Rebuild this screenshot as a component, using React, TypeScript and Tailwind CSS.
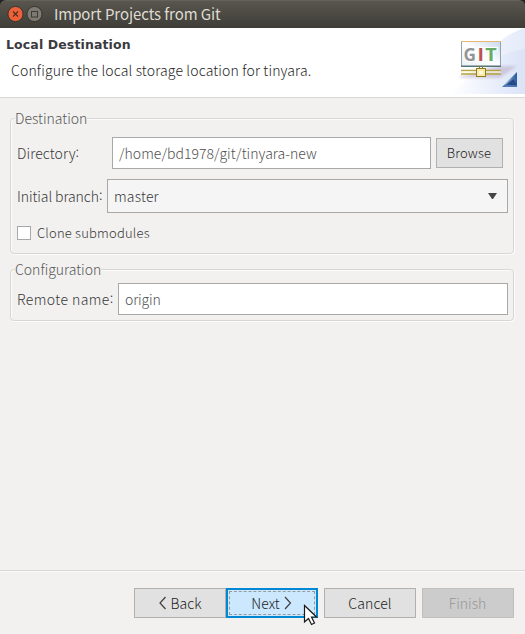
import type { ReactNode } from "react";

function Group({ title, className, children }: { title: string; className: string; children: ReactNode }) {
  return (
    <section className={`relative ml-[10px] w-[504px] rounded-[4px] border border-[#d8d7d6] shadow-[1px_1px_0_#fcfcfc,inset_1px_1px_0_#fcfcfc] ${className}`}>
      <h2 className="absolute left-[4px] -top-[11px] h-[20px] whitespace-nowrap bg-[#f2f1f0] text-[14px] leading-[21px] text-[#585858]">{title}</h2>
      {children}
    </section>
  );
}

function GitBanner() {
  return (
    <svg className="block h-[69px] w-[75px]" viewBox="450 28 75 69">
      <defs>
        <linearGradient id="wash" x1="0" x2="1">
          <stop offset="0" stopColor="#fff" />
          <stop offset="1" stopColor="#d5dff6" />
        </linearGradient>
        <linearGradient id="frame" x1="0" y1="0" x2="0" y2="1">
          <stop offset="0" stopColor="#e9b676" />
          <stop offset="0.45" stopColor="#94a5ad" />
          <stop offset="1" stopColor="#56777c" />
        </linearGradient>
        <linearGradient id="screen" x1="0" y1="1" x2="1" y2="0">
          <stop offset="0" stopColor="#e9eff2" />
          <stop offset="0.5" stopColor="#fff" />
          <stop offset="1" stopColor="#c9d9ee" />
        </linearGradient>
        <linearGradient id="corner" x1="0" x2="1">
          <stop offset="0" stopColor="#a9c8e4" />
          <stop offset="1" stopColor="#2b5b9d" />
        </linearGradient>
        <filter id="soft" x="-20%" y="-60%" width="140%" height="220%"><feGaussianBlur stdDeviation="1.8" /></filter>
      </defs>
      <path d="M450 94Q475 72 483 61Q500 35 525 28V94Z" fill="url(#wash)" opacity=".65" />
      <path d="M450 94Q475 82 490 65Q504 51 525 49V94Z" fill="url(#wash)" opacity=".65" />
      <path d="M460 76L500 66H517L500 78H460Z" fill="#a993b5" opacity=".4" filter="url(#soft)" />
      <rect x="461.5" y="41.5" width="39" height="25" fill="url(#screen)" />
      <path d="M461 41.5H501" stroke="#e9b676" />
      <path d="M461.5 42V66M500.5 42V66" stroke="#91a4ab" />
      <path d="M461 66.2H501" stroke="#54767b" strokeWidth="1.5" />
      <g fontFamily="Open Sans, sans-serif" fontWeight="700" fontSize="17" stroke="#fff" strokeWidth="2" paintOrder="stroke">
        <text x="463.5" y="60.5" fill="#929496" textLength="12.5" lengthAdjust="spacingAndGlyphs">G</text>
        <text x="477.5" y="60.5" fill="#bd5055" textLength="6.5" lengthAdjust="spacingAndGlyphs">I</text>
        <text x="485.3" y="60.5" fill="#64ad68" textLength="11.5" lengthAdjust="spacingAndGlyphs">T</text>
      </g>
      <path d="M461 70.5H501M461 74H501" stroke="#b5a444" strokeWidth="1.4" />
      <path d="M461 72H501" stroke="#fffbd4" />
      <path d="M479.5 66V69M482.5 66V69" stroke="#8b7b24" />
      <rect x="476.5" y="68.5" width="9" height="8" fill="#f8e9a9" stroke="#917d1e" />
      <rect x="479" y="71" width="4" height="3" fill="#fffae2" />
      <path d="M502 87L517 72V87Z" fill="url(#corner)" />
      <path d="M505 85.5L513.5 79L517 85.5Z" fill="#244b87" />
      <path d="M502 87L505 84.5L517 85.5V87Z" fill="#4f79b4" />
    </svg>
  );
}

function Chevron({ left = false }: { left?: boolean }) {
  return (
    <svg width="8" height="14" viewBox="0 0 8 14" className="shrink-0" fill="none" stroke="#404040" strokeWidth="1.2">
      <path d={left ? "M6.5 1L1 7L6.5 13" : "M1 1L6.5 7L1 13"} />
    </svg>
  );
}

function Label({ className, children }: { className: string; children: string }) {
  return (
    <span className={`shrink-0 whitespace-nowrap ${className}`}>
      {children}<span className="relative -top-[2px]">:</span>
    </span>
  );
}

export default function App() {
  return (
    <main className="relative flex h-[634px] w-[525px] flex-col overflow-hidden bg-[#f2f1f0] font-['Noto_Sans_CJK_KR','Noto_Sans',sans-serif] text-[14px] font-light text-[#383838]">
      <div className="h-[28px] shrink-0 bg-[#222]">
        <header className="flex h-[28px] items-center rounded-t-[6px] border-t border-[#63615a] bg-linear-to-b from-[#59564e] to-[#3e3d38] pl-[7px]">
          <svg width="36" height="17" viewBox="0 0 36 17">
            <circle cx="8.5" cy="8" r="7.6" fill="#ed6138" stroke="#353430" />
            <path d="M6 5.5L11 10.5M11 5.5L6 10.5" stroke="#4a2d22" strokeWidth="1.1" />
            <circle cx="27.5" cy="8" r="7.6" fill="#7d7a71" stroke="#353430" />
            <rect x="24.5" y="5.5" width="6" height="5.5" fill="none" stroke="#3c3b37" />
          </svg>
          <h1 className="ml-[11px] whitespace-nowrap text-[15px] font-normal tracking-[-0.08px] text-[#dfdbd2]">Import Projects from Git</h1>
        </header>
      </div>
      <div className="flex h-[70px] shrink-0 justify-between border-b border-[#d9d8d7] bg-white">
        <div>
          <h2 className="ml-[6px] mt-[8px] whitespace-nowrap font-['DejaVu_Sans',sans-serif] text-[12.5px] font-bold leading-[18px] tracking-[0.12px] text-[#3b3b3f]">Local Destination</h2>
          <p className="ml-[11px] mt-[6px] whitespace-nowrap leading-[20px] tracking-[0.15px] text-[#262626]">Configure the local storage location for tinyara.</p>
        </div>
        <GitBanner />
      </div>

      <Group title="Destination" className="mt-[20px] h-[136px] shrink-0">
        <div className="mt-[18px] flex h-[32px] items-center pl-[6px]">
          <Label className="w-[95px] tracking-[0.1px]">Directory</Label>
          <div className="flex h-[32px] w-[319px] shrink-0 items-center border border-[#a8a8a8] bg-white pl-[6px] tracking-[0.03px] text-[#505050]">/home/bd1978/git/tinyara-new</div>
          <button className="ml-[5px] h-[30px] w-[67px] shrink-0 border border-[#b0b0b0] bg-[#e1e1e1] pr-[1px] text-[13px] tracking-[0.2px] text-[#222]">Browse</button>
        </div>
        <div className="mt-[10px] flex h-[34px] items-center pl-[6px]">
          <Label className="w-[90px] tracking-[-0.08px]">Initial branch</Label>
          <div className="flex h-[34px] w-[401px] shrink-0 items-center justify-between border border-[#a8a8a8] bg-[#f5f5f5] pl-[6px] pr-[10px] tracking-[0.2px]">
            master
            <svg width="9" height="7" viewBox="0 0 9 7"><path d="M0 0H9L5 6H4Z" fill="#454545" /></svg>
          </div>
        </div>
        <div className="mt-[13px] flex h-[14px] items-center gap-[6px] pl-[6px] text-[13px]">
          <span className="size-[14px] border border-[#a8a8a8] bg-white" />
          <span className="whitespace-nowrap tracking-[0.2px]">Clone submodules</span>
        </div>
      </Group>

      <Group title="Configuration" className="mt-[15px] h-[52px] shrink-0">
        <div className="mt-[13px] flex h-[32px] items-center pl-[6px]">
          <Label className="w-[101px] tracking-[0.42px]">Remote name</Label>
          <div className="flex h-[32px] w-[390px] shrink-0 items-center border border-[#a8a8a8] bg-white pl-[6px] tracking-[-0.15px] text-[#505050]">origin</div>
        </div>
      </Group>

      <footer className="mt-auto flex h-[64px] shrink-0 border-t border-[#d9d8d7] pl-[134px] pt-[17px] text-[#222] shadow-[inset_0_1px_0_#fafafa]">
        <button className="flex h-[30px] w-[92px] items-center justify-center gap-[4px] border border-[#b0b0b0] bg-[#e1e1e1]"><Chevron left />Back</button>
        <button className="h-[30px] w-[92px] border-2 border-[#0088d4] bg-[#cce8ff] p-[1px]">
          <span className="flex h-full items-center justify-center gap-[4px] border border-dashed border-[#999] pr-[1px]">Next<Chevron /></span>
        </button>
        <button className="ml-[6px] h-[30px] w-[92px] border border-[#b0b0b0] bg-[#e1e1e1] tracking-[0.1px]">Cancel</button>
        <button className="ml-[6px] h-[30px] w-[92px] border border-[#bfbfbf] bg-[#cccccc] pr-[1px] text-[#969696]">Finish</button>
      </footer>
      <svg className="absolute left-[303px] top-[604px]" width="16" height="23" viewBox="0 0 16 23">
        <path d="M1.5 1.5V18L5.5 14.5L8.5 20.5L11.5 19L8.5 13H13.5Z" fill="#fff" stroke="#1a1a1a" strokeWidth="1.2" />
      </svg>
    </main>
  );
}
